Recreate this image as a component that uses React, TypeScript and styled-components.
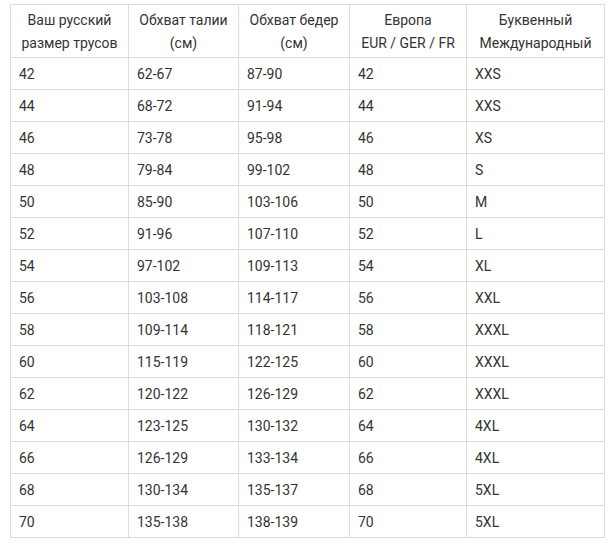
import React, { ReactElement } from 'react';
import styled, { createGlobalStyle } from 'styled-components';

const GlobalStyle = createGlobalStyle`
  body {
    margin: 0;
    background: #fff;
    font-family: Roboto, "Liberation Sans", sans-serif;
  }
`;

const Wrapper = styled.div`
  padding: 4px 0 0 10px;
`;

const Table = styled.table`
  border-collapse: collapse;
  table-layout: fixed;
  width: 594px;
  font-size: 14px;
  color: #333;
`;

const Col = styled.col<{ $w: number }>`
  width: ${({ $w }) => $w}px;
`;

const HeadCell = styled.th`
  box-sizing: border-box;
  height: 53px;
  padding: 1px 2px 0;
  border: 1px solid #dcdcdc;
  font-weight: 400;
  text-align: center;
  line-height: 23px;
  vertical-align: middle;
  white-space: nowrap;
`;

const Cell = styled.td`
  box-sizing: border-box;
  height: 32px;
  padding: 0 8px;
  border: 1px solid #dcdcdc;
  line-height: 20px;
  vertical-align: middle;
`;

const columns: [string, string, number][] = [
  ['Ваш русский', 'размер трусов', 118],
  ['Обхват талии', '(см)', 110],
  ['Обхват бедер', '(см)', 111],
  ['Европа', 'EUR / GER / FR', 117],
  ['Буквенный', 'Международный', 138],
];

const rows: string[][] = [
  ['42', '62-67', '87-90', '42', 'XXS'],
  ['44', '68-72', '91-94', '44', 'XXS'],
  ['46', '73-78', '95-98', '46', 'XS'],
  ['48', '79-84', '99-102', '48', 'S'],
  ['50', '85-90', '103-106', '50', 'M'],
  ['52', '91-96', '107-110', '52', 'L'],
  ['54', '97-102', '109-113', '54', 'XL'],
  ['56', '103-108', '114-117', '56', 'XXL'],
  ['58', '109-114', '118-121', '58', 'XXXL'],
  ['60', '115-119', '122-125', '60', 'XXXL'],
  ['62', '120-122', '126-129', '62', 'XXXL'],
  ['64', '123-125', '130-132', '64', '4XL'],
  ['66', '126-129', '133-134', '66', '4XL'],
  ['68', '130-134', '135-137', '68', '5XL'],
  ['70', '135-138', '138-139', '70', '5XL'],
];

function App(): ReactElement {
  return (
    <>
      <GlobalStyle />
      <Wrapper>
        <Table>
          <colgroup>
            {columns.map(([a, , w]) => (
              <Col key={a} $w={w} />
            ))}
          </colgroup>
          <thead>
            <tr>
              {columns.map(([a, b]) => (
                <HeadCell key={a}>
                  {a}
                  <br />
                  {b}
                </HeadCell>
              ))}
            </tr>
          </thead>
          <tbody>
            {rows.map((r) => (
              <tr key={r[0]}>
                {r.map((v, i) => (
                  <Cell key={i}>{v}</Cell>
                ))}
              </tr>
            ))}
          </tbody>
        </Table>
      </Wrapper>
    </>
  );
}

export default App;
